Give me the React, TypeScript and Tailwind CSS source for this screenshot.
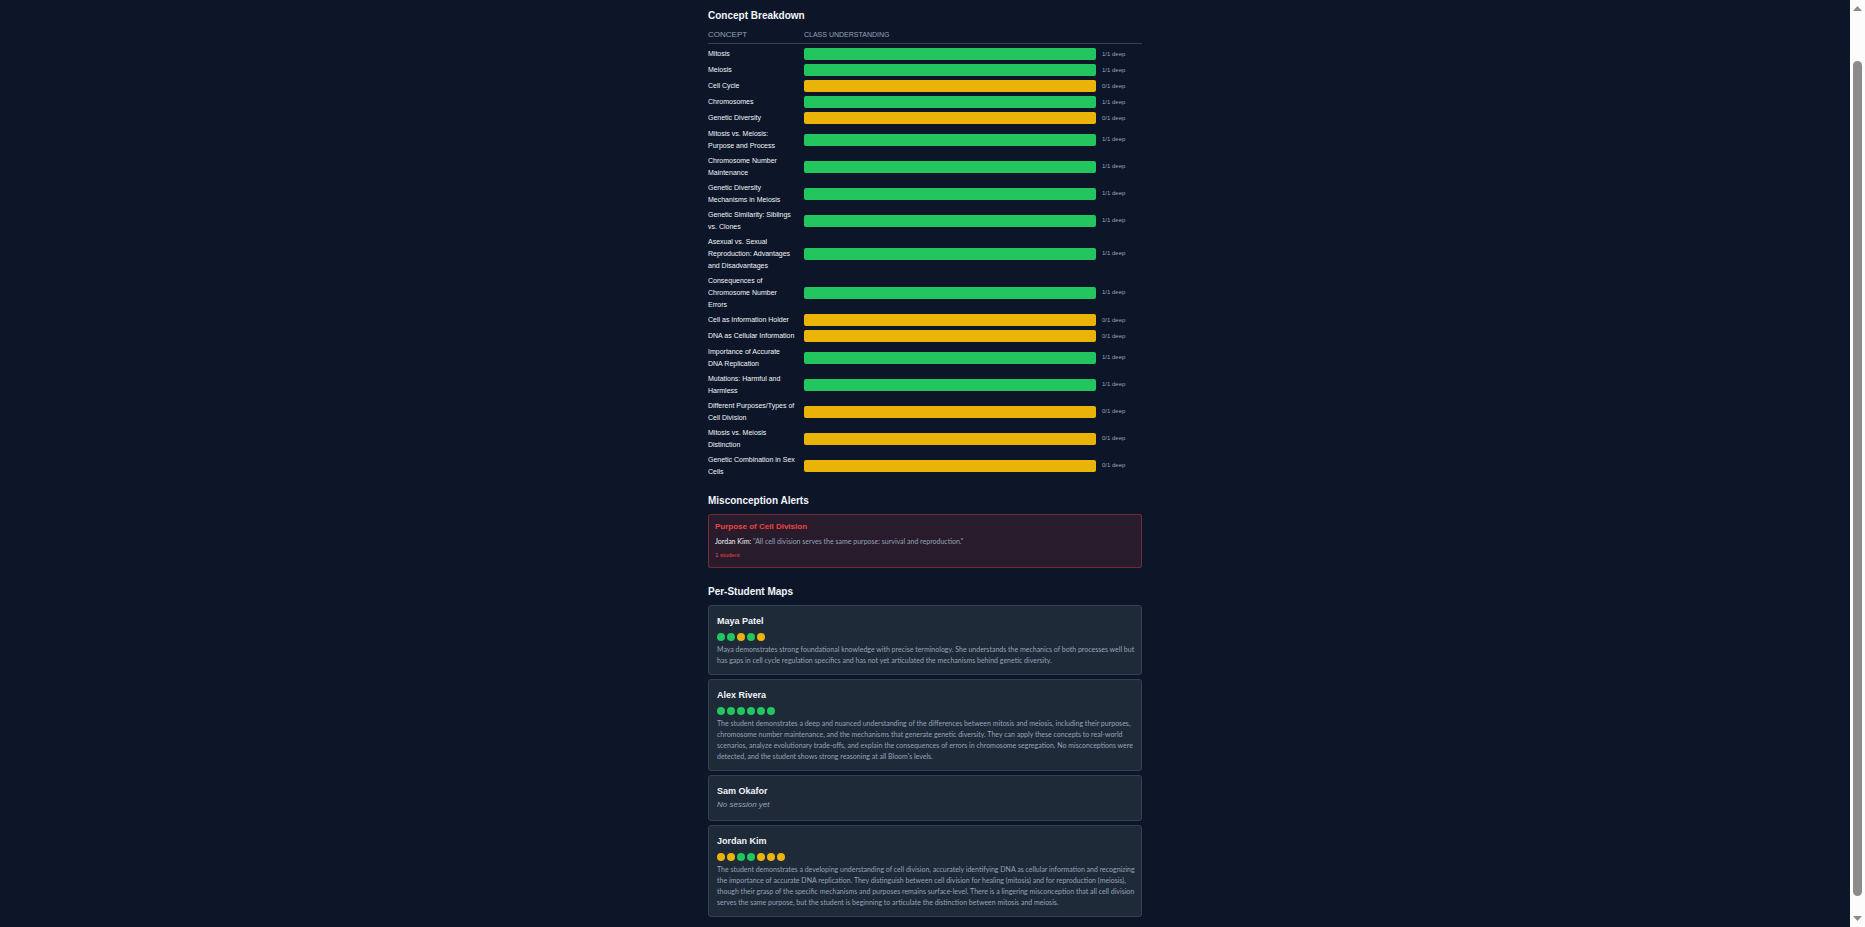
type Level = 'deep' | 'partial';

const CONCEPTS: { name: string; level: Level }[] = [
  { name: 'Mitosis', level: 'deep' },
  { name: 'Meiosis', level: 'deep' },
  { name: 'Cell Cycle', level: 'partial' },
  { name: 'Chromosomes', level: 'deep' },
  { name: 'Genetic Diversity', level: 'partial' },
  { name: 'Mitosis vs. Meiosis: Purpose and Process', level: 'deep' },
  { name: 'Chromosome Number Maintenance', level: 'deep' },
  { name: 'Genetic Diversity Mechanisms in Meiosis', level: 'deep' },
  { name: 'Genetic Similarity: Siblings vs. Clones', level: 'deep' },
  { name: 'Asexual vs. Sexual Reproduction: Advantages and Disadvantages', level: 'deep' },
  { name: 'Consequences of Chromosome Number Errors', level: 'deep' },
  { name: 'Cell as Information Holder', level: 'partial' },
  { name: 'DNA as Cellular Information', level: 'partial' },
  { name: 'Importance of Accurate DNA Replication', level: 'deep' },
  { name: 'Mutations: Harmful and Harmless', level: 'deep' },
  { name: 'Different Purposes/Types of Cell Division', level: 'partial' },
  { name: 'Mitosis vs. Meiosis Distinction', level: 'partial' },
  { name: 'Genetic Combination in Sex Cells', level: 'partial' },
];

const STUDENTS: { name: string; levels: Level[]; summary?: string }[] = [
  {
    name: 'Maya Patel',
    levels: ['deep', 'deep', 'partial', 'deep', 'partial'],
    summary:
      'Maya demonstrates strong foundational knowledge with precise terminology. She understands the mechanics of both processes well but has gaps in cell cycle regulation specifics and has not yet articulated the mechanisms behind genetic diversity.',
  },
  {
    name: 'Alex Rivera',
    levels: ['deep', 'deep', 'deep', 'deep', 'deep', 'deep'],
    summary:
      "The student demonstrates a deep and nuanced understanding of the differences between mitosis and meiosis, including their purposes, chromosome number maintenance, and the mechanisms that generate genetic diversity. They can apply these concepts to real-world scenarios, analyze evolutionary trade-offs, and explain the consequences of errors in chromosome segregation. No misconceptions were detected, and the student shows strong reasoning at all Bloom's levels.",
  },
  { name: 'Sam Okafor', levels: [] },
  {
    name: 'Jordan Kim',
    levels: ['partial', 'partial', 'deep', 'deep', 'partial', 'partial', 'partial'],
    summary:
      'The student demonstrates a developing understanding of cell division, accurately identifying DNA as cellular information and recognizing the importance of accurate DNA replication. They distinguish between cell division for healing (mitosis) and for reproduction (meiosis), though their grasp of the specific mechanisms and purposes remains surface-level. There is a lingering misconception that all cell division serves the same purpose, but the student is beginning to articulate the distinction between mitosis and meiosis.',
  },
];

const LEVEL_BG: Record<Level, string> = {
  deep: 'bg-[#22c55e]',
  partial: 'bg-[#eab308]',
};

function ConceptTable() {
  return (
    <table className="w-full table-fixed border-collapse text-left">
      <colgroup>
        <col className="w-24" />
        <col />
        <col className="w-[46px]" />
      </colgroup>
      <thead>
        <tr className="border-b border-[#334155] text-[#94a3b8]">
          <th className="pb-0.5 text-[8px] leading-[12px] font-normal">CONCEPT</th>
          <th colSpan={2} className="pb-0.5 align-top text-[7px] leading-[11px] font-normal">
            CLASS UNDERSTANDING
          </th>
        </tr>
        <tr className="h-1" />
      </thead>
      <tbody>
        {CONCEPTS.map(c => (
          <tr key={c.name} className="h-4">
            <th scope="row" className="pb-[3px] pr-2 align-middle text-[7px] leading-[12px] font-normal">
              {c.name}
            </th>
            <td className="pb-[3px] align-middle">
              <div className={`h-3 rounded-[2px] ${LEVEL_BG[c.level]}`} />
            </td>
            <td className="pb-1 pl-1.5 align-middle text-[6px] leading-[10px] text-[#94a3b8] whitespace-nowrap">
              {c.level === 'deep' ? '1/1 deep' : '0/1 deep'}
            </td>
          </tr>
        ))}
      </tbody>
    </table>
  );
}

function Scrollbar() {
  return (
    <div className="w-[15px] shrink-0 bg-[#fcfcfc] flex flex-col items-center py-1.5" aria-hidden="true">
      <svg width="9" height="5" viewBox="0 0 9 5" fill="#8b8b8b">
        <path d="M4.5 0L9 5H0Z" />
      </svg>
      <div className="mt-[50px] mb-5 w-[9px] flex-1 rounded-full bg-[#8b8b8b]" />
      <svg width="9" height="5" viewBox="0 0 9 5" fill="#8b8b8b">
        <path d="M0 0H9L4.5 5Z" />
      </svg>
    </div>
  );
}

export default function App() {
  return (
    <div
      className="flex h-screen overflow-hidden bg-[#0d1628] text-[#f1f5f9]"
      style={{ fontFamily: '"Liberation Sans", Arial, sans-serif' }}
    >
      <main className="flex-1 overflow-hidden">
        <div className="mx-auto max-w-[450px] px-2 pt-2">
          <section>
            <h2 className="text-[10px] leading-4 font-bold">Concept Breakdown</h2>
            <div className="mt-[5px]">
              <ConceptTable />
            </div>
          </section>

          {/* Alerts */}
          <section className="mt-3">
            <h2 className="text-[10px] leading-4 font-bold">Misconception Alerts</h2>
            <div className="mt-[5px] rounded-[3px] border border-[#ef4444]/40 bg-[#ef4444]/12 px-1.5 pt-[5px] pb-[7px]">
              <h3 className="text-[8px] leading-[13px] font-bold text-[#ef4444]">Purpose of Cell Division</h3>
              <p className="mt-[3px] font-[Lato,sans-serif] text-[7px] leading-[11px] text-[#94a3b8]">
                <span className="text-[#f1f5f9]">Jordan Kim:</span> "All cell division serves the same purpose: survival
                and reproduction."
              </p>
              <p className="mt-[3px] text-[6px] leading-[10px] text-[#ef4444]">1 student</p>
            </div>
          </section>

          {/* Student cards */}
          <section className="mt-4">
            <h2 className="text-[10px] leading-4 font-bold">Per-Student Maps</h2>
            <div className="mt-[5px] flex flex-col gap-1">
              {STUDENTS.map(s => (
                <article key={s.name} className="rounded-[3px] border border-[#334155] bg-[#1f2a38] py-2 pl-2 pr-0.5">
                  <h3 className="text-[9px] leading-[14px] font-bold">{s.name}</h3>
                  {s.summary ? (
                    <>
                      <div className="mt-[5px] flex gap-0.5">
                        {s.levels.map((level, i) => (
                          <span key={i} className={`size-2 rounded-full ${LEVEL_BG[level]}`} />
                        ))}
                      </div>
                      <p className="mt-[3px] font-[Lato,sans-serif] text-[7px] leading-[11px] text-[#94a3b8]">
                        {s.summary}
                      </p>
                    </>
                  ) : (
                    <p className="text-[8px] leading-[14px] italic text-[#94a3b8]">No session yet</p>
                  )}
                </article>
              ))}
            </div>
          </section>
        </div>
      </main>
      <Scrollbar />
    </div>
  );
}
